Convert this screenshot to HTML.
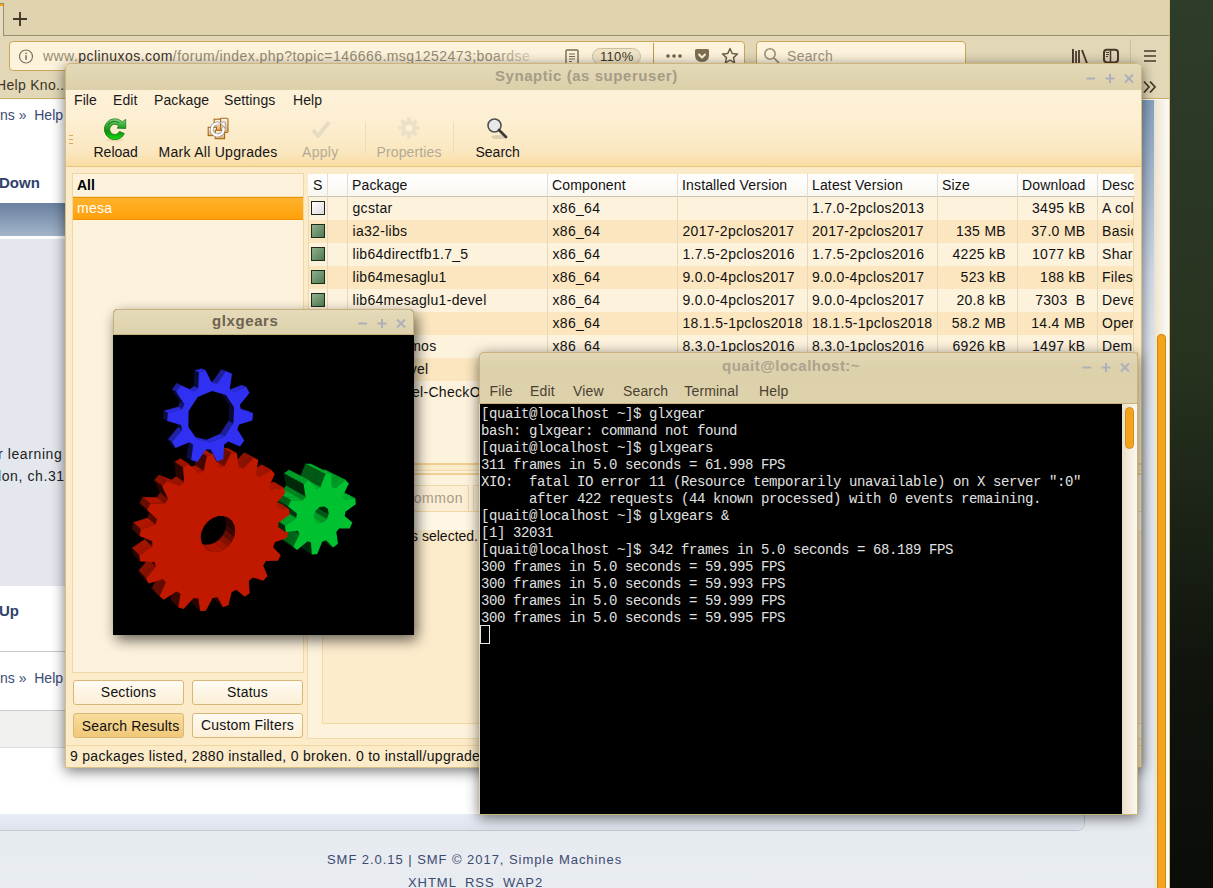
<!DOCTYPE html>
<html><head><meta charset="utf-8">
<style>
*{margin:0;padding:0;box-sizing:border-box}
html,body{width:1213px;height:888px;overflow:hidden}
body{position:relative;font-family:"Liberation Sans",sans-serif;font-size:14px;color:#000;background:linear-gradient(180deg,#2e3c2a 0%,#27331f 40%,#10140d 75%,#0a0c08 100%)}
.a{position:absolute}
.t{position:absolute;white-space:nowrap;line-height:16px}
/* firefox */
#ff{left:0;top:0;width:1170px;height:888px;background:#fff;overflow:hidden;border-right:1px solid #d8c48c}
#tabbar{left:0;top:0;width:1170px;height:36px;background:#dfd3b0;border-bottom:1px solid #9c8c6a}
#nav{left:0;top:36px;width:1170px;height:63px;background:#e2d7b6;border-bottom:1px solid #c9ad6a}
#page{left:0;top:100px;width:1170px;height:788px;background:#fff}
/* windows */
.win{position:absolute;box-shadow:0 3px 14px rgba(0,0,0,.55)}
#syn{left:65px;top:63px;width:1077px;height:705px;background:#fcebc8;border-radius:5px 5px 0 0;overflow:hidden}
.title{position:absolute;left:0;top:0;right:0;height:27px;background:linear-gradient(#e3d8b6,#dcd0ab);border-radius:6px 6px 0 0;font-weight:bold;color:#a39a84;text-align:center;line-height:27px}
.wbtn{position:absolute;color:#a8a8b0;font-weight:bold;font-size:15px;line-height:16px}
.mono{font-family:"Liberation Mono",monospace}
</style></head><body>
<div id="ff" class="a">
  <div id="tabbar" class="a">
    <div class="a" style="left:0;top:3px;width:4px;height:33px;background:#e6dcc0;border-right:1px solid #9a8c70;border-top:1px solid #9a8c70"></div>
    <div class="a" style="left:0;top:4px;width:3px;height:2px;background:#fca40e"></div>
    <svg class="a" style="left:12px;top:11px" width="16" height="16" viewBox="0 0 16 16"><path d="M8 1V15M1 8H15" stroke="#45362a" stroke-width="1.9"/></svg>
  </div>
  <div id="nav" class="a">
    <div class="a" style="left:9px;top:5px;width:736px;height:30px;background:#fdf3dc;border:1px solid #c7a65c;border-radius:4px"></div>
    <svg class="a" style="left:17px;top:12px" width="18" height="18" viewBox="0 0 18 18"><circle cx="9" cy="8.5" r="6.5" fill="none" stroke="#7d705a" stroke-width="1.2"/><rect x="8.3" y="7.2" width="1.5" height="4.6" fill="#7d705a"/><rect x="8.3" y="4.6" width="1.5" height="1.5" fill="#7d705a"/></svg>
    <div class="t" style="left:43px;top:12px;font-size:14px;color:#978b70;letter-spacing:0.45px">www.<span style="color:#3e3426">pclinuxos.com</span>/forum/index.php?topic=146666.msg1252473;boardse</div>
    <div class="a" style="left:490px;top:6px;width:75px;height:28px;background:linear-gradient(90deg,rgba(253,243,220,0),#fdf3dc 80%)"></div>
    <svg class="a" style="left:565px;top:13px" width="14" height="16" viewBox="0 0 14 16"><rect x="1" y="1" width="12" height="14" rx="1" fill="none" stroke="#786a52" stroke-width="1.4"/><path d="M4 5h6M4 7.5h6M4 10h6M4 12.5h3" stroke="#786a52" stroke-width="1"/></svg>
    <div class="a" style="left:592px;top:12px;width:49px;height:17px;border:1px solid #c9bea2;border-radius:9px;background:#efe4c6"></div>
    <div class="t" style="left:600px;top:13px;font-size:13px;color:#3e3426;letter-spacing:0.3px">110%</div>
    <div class="a" style="left:653px;top:7px;width:1px;height:27px;background:#c49a48"></div>
    <svg class="a" style="left:665px;top:17px" width="18" height="6"><circle cx="3" cy="3" r="1.8" fill="#6e6048"/><circle cx="9" cy="3" r="1.8" fill="#6e6048"/><circle cx="15" cy="3" r="1.8" fill="#6e6048"/></svg>
    <svg class="a" style="left:694px;top:12px" width="16" height="16" viewBox="0 0 16 16"><path d="M1 2.5Q1 1 2.5 1h11Q15 1 15 2.5V7Q15 14 8 14Q1 14 1 7Z" fill="#7d6e52"/><path d="M4.5 6L8 9.5L11.5 6" fill="none" stroke="#fdf3dc" stroke-width="2"/></svg>
    <svg class="a" style="left:721px;top:11px" width="18" height="18" viewBox="0 0 18 18"><path d="M9 1.5L11.2 6.4L16.5 7L12.5 10.6L13.6 15.9L9 13.2L4.4 15.9L5.5 10.6L1.5 7L6.8 6.4Z" fill="none" stroke="#6e6048" stroke-width="1.5" stroke-linejoin="round"/></svg>
    <div class="a" style="left:756px;top:5px;width:210px;height:30px;background:#fdf3dc;border:1px solid #c7a65c;border-radius:4px"></div>
    <svg class="a" style="left:763px;top:11px" width="18" height="18" viewBox="0 0 18 18"><circle cx="7" cy="7" r="5.2" fill="none" stroke="#9d917a" stroke-width="1.6"/><path d="M10.8 10.8L16 16" stroke="#9d917a" stroke-width="1.8"/></svg>
    <div class="t" style="left:787px;top:12px;font-size:14px;color:#9d917a;letter-spacing:0.3px">Search</div>
    <svg class="a" style="left:1071px;top:12px" width="18" height="16" viewBox="0 0 18 16"><rect x="1" y="1" width="1.9" height="15" fill="#4a3a2c"/><rect x="4.2" y="3" width="1.7" height="13" fill="#4a3a2c"/><rect x="7.1" y="2" width="1.8" height="14" fill="#4a3a2c"/><path d="M11 2L16 15.5" stroke="#4a3a2c" stroke-width="1.9"/></svg>
    <svg class="a" style="left:1102px;top:12px" width="18" height="16" viewBox="0 0 18 16"><rect x="2" y="1.8" width="14" height="12.6" rx="2.8" fill="none" stroke="#4a3a2c" stroke-width="2"/><path d="M8.5 1.5V14.5" stroke="#4a3a2c" stroke-width="1.5"/><path d="M4 4.5h3M4 6.5h3M4 8.5h2" stroke="#4a3a2c" stroke-width="1"/></svg>
    <div class="a" style="left:1130px;top:3px;width:1px;height:30px;background:#cdbf9a"></div>
    <svg class="a" style="left:1143px;top:13px" width="14" height="14" viewBox="0 0 14 14"><path d="M1 2h12M1 7h12M1 12h12" stroke="#4a3a2c" stroke-width="1.7"/></svg>
    <div class="t" style="left:-4px;top:41px;font-size:14px;color:#3e3426;letter-spacing:0.3px">Help Kno..</div>
    <svg class="a" style="left:1142px;top:44px" width="16" height="14" viewBox="0 0 16 14"><path d="M2 1.5L7 7L2 12.5M8 1.5L13 7L8 12.5" fill="none" stroke="#4a3a2c" stroke-width="1.8"/></svg>
  </div>
  <div id="page" class="a">
    <div class="a" style="left:0;top:0;width:1154px;height:788px;background:linear-gradient(180deg,#87a2c0 0px,#a9bcd2 80px,#d2dce8 170px,#e2e8ef 240px,#e8ecf1 788px)"></div>
    <div class="a" style="left:-10px;top:0;width:1095px;height:731px;background:#fff;border:1px solid #c4c8cc;border-top:none;border-radius:0 0 8px 0"></div>
    <div class="t" style="left:0;top:7px;color:#3b4a74">ns&nbsp;»&nbsp; Help</div>
    <div class="t" style="left:-1px;top:75px;font-weight:bold;font-size:15px;color:#30426a">Down</div>
    <div class="a" style="left:0;top:103px;width:1084px;height:33px;background:linear-gradient(#6a809e,#a2b5ca)"></div>
    <div class="a" style="left:0;top:139px;width:1084px;height:347px;background:#e4e8ee"></div>
    <div class="t" style="left:-2px;top:346px;color:#222;letter-spacing:0.6px">r learning</div>
    <div class="t" style="left:-2px;top:368px;color:#222;letter-spacing:0.6px">lon, ch.31</div>
    <div class="t" style="left:-1px;top:503px;font-weight:bold;font-size:15px;color:#30426a">Up</div>
    <div class="a" style="left:0;top:551px;width:1084px;height:1px;background:#c6c9cc"></div>
    <div class="t" style="left:0;top:570px;color:#3b4a74">ns&nbsp;»&nbsp; Help</div>
    <div class="a" style="left:0;top:610px;width:1084px;height:1px;background:#c9cbcc"></div>
    <div class="a" style="left:0;top:611px;width:1084px;height:36px;background:#f1f1ef"></div>
    <div class="a" style="left:0;top:647px;width:1084px;height:1px;background:#dcdcdc"></div>
    <div class="a" style="left:0;top:714px;width:1084px;height:16px;background:linear-gradient(#e8ecf4,#dde3ee);border-radius:0 0 8px 0"></div>
    <div class="t" style="left:327px;top:752px;font-size:13px;color:#3b4a70;letter-spacing:0.95px">SMF 2.0.15 | SMF © 2017, Simple Machines</div>
    <div class="t" style="left:408px;top:775px;font-size:13px;color:#3b4a70;letter-spacing:0.95px">XHTML</div><div class="t" style="left:465px;top:775px;font-size:13px;color:#3b4a70;letter-spacing:0.95px">RSS</div><div class="t" style="left:503px;top:775px;font-size:13px;color:#3b4a70;letter-spacing:0.95px">WAP2</div>
    <div class="a" style="left:1154px;top:0;width:15px;height:788px;background:linear-gradient(90deg,#ede4d0,#fdfbf6)"></div>
    <div class="a" style="left:1157px;top:234px;width:9px;height:560px;background:#f5a31a;border:1px solid #d08a10;border-radius:4px"></div>
  </div>
</div>

<div id="syn" class="win">
<div class="a" style="left:0px;top:0px;width:1077px;height:27px;background:linear-gradient(#e4d9b8,#dcd0aa);border-radius:5px 5px 0 0;border:1px solid #cfb47a;border-bottom:none"></div>
<div class="t" style="left:430px;top:5px;font-weight:bold;font-size:15px;color:#a59c86;letter-spacing:0.55px">Synaptic (as superuser)</div>
<svg class="a" style="left:1021px;top:10px" width="10" height="10" viewBox="0 0 10 10"><path d="M0.5 5.5H9" stroke="#adb0ba" stroke-width="2"/></svg>
<svg class="a" style="left:1040px;top:10px" width="10" height="10" viewBox="0 0 10 10"><path d="M0.5 5.5H9.5M5 1V10" stroke="#adb0ba" stroke-width="2"/></svg>
<svg class="a" style="left:1059px;top:10px" width="10" height="10" viewBox="0 0 10 10"><path d="M1 1.5L9 9.5M9 1.5L1 9.5" stroke="#adb0ba" stroke-width="2"/></svg>
<div class="a" style="left:0px;top:27px;width:1077px;height:77px;background:linear-gradient(180deg,#fdf1d8 0px,#fdefd2 30px,#fbe8c2 60px,#f8dca4 76px)"></div>
<div class="a" style="left:0px;top:103px;width:1077px;height:1px;background:#ecc57a"></div>
<div class="t" style="left:9px;top:29px;letter-spacing:0.1px;color:#1a1a1a">File</div>
<div class="t" style="left:48px;top:29px;letter-spacing:0.1px;color:#1a1a1a">Edit</div>
<div class="t" style="left:89px;top:29px;letter-spacing:0.1px;color:#1a1a1a">Package</div>
<div class="t" style="left:159px;top:29px;letter-spacing:0.1px;color:#1a1a1a">Settings</div>
<div class="t" style="left:228px;top:29px;letter-spacing:0.1px;color:#1a1a1a">Help</div>
<div class="a" style="left:4px;top:72px;width:4px;height:1px;background:#d9a860"></div>
<div class="a" style="left:4px;top:76px;width:4px;height:1px;background:#d9a860"></div>
<div class="a" style="left:4px;top:80px;width:4px;height:1px;background:#d9a860"></div>
<div class="t" style="left:28.5px;top:81px;color:#141414">Reload</div>
<div class="t" style="left:93.5px;top:81px;color:#141414;letter-spacing:0.28px">Mark All Upgrades</div>
<div class="t" style="left:237px;top:81px;color:#b4aa94;letter-spacing:0.3px">Apply</div>
<div class="t" style="left:311.5px;top:81px;color:#b4aa94;letter-spacing:0.12px">Properties</div>
<div class="t" style="left:410.5px;top:81px;color:#141414">Search</div>
<div class="a" style="left:300px;top:59px;width:1px;height:33px;background:#f2dcae"></div>
<div class="a" style="left:388px;top:59px;width:1px;height:33px;background:#f2dcae"></div>
<svg class="a" style="left:35px;top:51px" width="30" height="30" viewBox="0 0 30 30">
<defs><linearGradient id="gr" x1="0" y1="0" x2="0" y2="1"><stop offset="0" stop-color="#8adc8a"/><stop offset="0.35" stop-color="#2ea82e"/><stop offset="0.6" stop-color="#0f8f0f"/><stop offset="1" stop-color="#12e012"/></linearGradient></defs>
<ellipse cx="15" cy="26" rx="9" ry="1.3" fill="rgba(120,80,20,0.12)"/>
<path d="M24.4,19.6 A10.5,10.5 0 1 1 22.3,7.8 L25.7,5.4 L25.7,14.5 L17.2,14.2 L18.6,12.0 A5.1,5.1 0 1 0 19.5,17.4 Z" fill="url(#gr)" stroke="#0b6e0b" stroke-width="0.7" stroke-linejoin="round"/>
<path d="M8 11 A7.5 7.5 0 0 1 19 9" fill="none" stroke="#0a5a0a" stroke-width="1.4" opacity="0.6"/></svg>
<svg class="a" style="left:138px;top:51px" width="30" height="30" viewBox="0 0 30 30">
<defs><linearGradient id="cd" x1="0" y1="0" x2="0" y2="1"><stop offset="0" stop-color="#fffaf0"/><stop offset="1" stop-color="#e0a860"/></linearGradient></defs>
<rect x="17" y="4.2" width="8" height="14.3" rx="1.2" fill="url(#cd)" stroke="#a86812" stroke-width="1.1"/>
<rect x="11.2" y="5.2" width="6.4" height="11.7" fill="url(#cd)" stroke="#a86812" stroke-width="1.1"/>
<rect x="5.2" y="13.3" width="8.3" height="8.3" fill="url(#cd)" stroke="#a86812" stroke-width="1.1"/>
<rect x="12.3" y="16.3" width="9.3" height="8.4" fill="url(#cd)" stroke="#a86812" stroke-width="1.1"/>
<path d="M20.3,13.5 A6,6 0 1 1 15.5,9.5" fill="none" stroke="#8a8e92" stroke-width="3.6"/>
<path d="M20.3,13.5 A6,6 0 1 1 15.5,9.5" fill="none" stroke="#fcfcfc" stroke-width="2.4"/>
<path d="M16.6,8.1 H22.3 V14.2 Z" fill="#fcfcfc" stroke="#8a8e92" stroke-width="0.8"/></svg>
<svg class="a" style="left:246px;top:57px" width="20" height="20" viewBox="0 0 20 20"><path d="M2 10L7 16L18 2" fill="none" stroke="#e6dcc4" stroke-width="4" stroke-linejoin="round"/></svg>
<svg class="a" style="left:333px;top:54px" width="22" height="22" viewBox="0 0 22 22"><g fill="#ece0c6"><circle cx="11" cy="11" r="7.5"/><rect x="9" y="0.5" width="4" height="21" rx="1"/><rect x="0.5" y="9" width="21" height="4" rx="1"/><rect x="9" y="0.5" width="4" height="21" rx="1" transform="rotate(45 11 11)"/><rect x="9" y="0.5" width="4" height="21" rx="1" transform="rotate(-45 11 11)"/></g><circle cx="11" cy="11" r="3.5" fill="#fcf0d8"/></svg>
<svg class="a" style="left:421px;top:54px" width="24" height="24" viewBox="0 0 24 24"><ellipse cx="13" cy="20" rx="8" ry="2" fill="rgba(0,0,0,0.12)"/><circle cx="8.5" cy="8.5" r="6.5" fill="#e8e8e8" stroke="#505050" stroke-width="1.6"/><path d="M13 13L20 20" stroke="#3a3a3a" stroke-width="2.8" stroke-linecap="round"/></svg>
<div class="a" style="left:0px;top:104px;width:1077px;height:601px;background:#fcebc8"></div>
<div class="a" style="left:7px;top:110px;width:232px;height:500px;background:#fdf2dc;border:1px solid #f0d8a6"></div>
<div class="a" style="left:8px;top:111px;width:230px;height:23px;background:#fdf2dc;border-bottom:1px solid #f2ddb0"></div>
<div class="t" style="left:12px;top:114px;font-weight:bold;font-size:14px;color:#000">All</div>
<div class="a" style="left:8px;top:134px;width:230px;height:23px;background:linear-gradient(#ffb32c,#ffa00a);border-top:1px solid #f09800;border-bottom:1px solid #ee9200"></div>
<div class="t" style="left:12px;top:137px;color:#fff;letter-spacing:0.3px">mesa</div>
<div class="a" style="left:8px;top:617px;width:111px;height:25px;background:linear-gradient(#fefbf3,#fcefd6);border:1px solid #d8b878;border-radius:3px"></div><div class="t" style="left:8px;top:621px;width:111px;text-align:center;color:#111;letter-spacing:0.2px">Sections</div>
<div class="a" style="left:127px;top:617px;width:111px;height:25px;background:linear-gradient(#fefbf3,#fcefd6);border:1px solid #d8b878;border-radius:3px"></div><div class="t" style="left:127px;top:621px;width:111px;text-align:center;color:#111;letter-spacing:0.2px">Status</div>
<div class="a" style="left:8px;top:650px;width:111px;height:25px;background:linear-gradient(#f8dc9c,#f0c878);border:1px solid #d8b878;border-radius:3px"></div><div class="t" style="left:10px;top:655px;width:111px;text-align:center;color:#111;letter-spacing:0.2px">Search Results</div>
<div class="a" style="left:127px;top:650px;width:111px;height:25px;background:linear-gradient(#fefbf3,#fcefd6);border:1px solid #d8b878;border-radius:3px"></div><div class="t" style="left:127px;top:654px;width:111px;text-align:center;color:#111;letter-spacing:0.2px">Custom Filters</div>
<div class="a" style="left:242px;top:407px;width:835px;height:269px;background:#fdf3dc;border:1px solid #f2daa8"></div>
<div class="a" style="left:257px;top:448px;width:820px;height:213px;border:1px solid #f2d9a4;background:#fdeccc"></div>
<div class="a" style="left:242px;top:400px;width:835px;height:2px;background:#f0cf90"></div>
<div class="a" style="left:242px;top:410px;width:835px;height:2px;background:#f0cf90"></div>
<div class="a" style="left:315px;top:422px;width:89px;height:26px;background:#fcefd6;border:1px solid #f0d8a8;border-bottom:none"></div>
<div class="t" style="left:338px;top:427px;color:#a89c88;letter-spacing:0.55px">Common</div>
<div class="a" style="left:408px;top:422px;width:47px;height:26px;background:#fcefd6;border:1px solid #f0d8a8;border-bottom:none"></div>
<div class="a" style="left:258px;top:449px;width:819px;height:18px;background:#fef6e6"></div>
<div class="t" style="left:85px;top:465px;width:328px;text-align:right;color:#111;letter-spacing:0px">No package is selected.</div>
<div class="a" style="left:0px;top:682px;width:1077px;height:1px;background:#f2d89e"></div>
<div class="t" style="left:5px;top:685px;color:#111;letter-spacing:0.3px">9 packages listed, 2880 installed, 0 broken. 0 to install/upgrade</div>
<div class="a" style="left:243px;top:111px;width:826px;height:289px;background:#fdf2dc;border-left:1px solid #f0d8a6;border-right:1px solid #f0d8a6;border-top:1px solid #f0d8a6"></div>
<div class="a" style="left:243px;top:111px;width:826px;height:23px;background:linear-gradient(#ffffff,#faf7f0);border-bottom:1px solid #c8c2b6"></div>
<div class="a" style="left:244px;top:134px;width:824px;height:23px;background:#fdf2dc"></div>
<div class="a" style="left:244px;top:157px;width:824px;height:23px;background:#fbe6bf"></div>
<div class="a" style="left:244px;top:180px;width:824px;height:23px;background:#fdf2dc"></div>
<div class="a" style="left:244px;top:203px;width:824px;height:23px;background:#fbe6bf"></div>
<div class="a" style="left:244px;top:226px;width:824px;height:23px;background:#fdf2dc"></div>
<div class="a" style="left:244px;top:249px;width:824px;height:23px;background:#fbe6bf"></div>
<div class="a" style="left:244px;top:272px;width:824px;height:23px;background:#fdf2dc"></div>
<div class="a" style="left:244px;top:295px;width:824px;height:23px;background:#fbe6bf"></div>
<div class="a" style="left:244px;top:318px;width:824px;height:23px;background:#fdf2dc"></div>
<div class="a" style="left:262px;top:111px;width:1px;height:289px;background:#e6d8bc"></div>
<div class="a" style="left:282px;top:111px;width:1px;height:289px;background:#e6d8bc"></div>
<div class="a" style="left:482px;top:111px;width:1px;height:289px;background:#e6d8bc"></div>
<div class="a" style="left:612px;top:111px;width:1px;height:289px;background:#e6d8bc"></div>
<div class="a" style="left:742px;top:111px;width:1px;height:289px;background:#e6d8bc"></div>
<div class="a" style="left:872px;top:111px;width:1px;height:289px;background:#e6d8bc"></div>
<div class="a" style="left:952px;top:111px;width:1px;height:289px;background:#e6d8bc"></div>
<div class="a" style="left:1032px;top:111px;width:1px;height:289px;background:#e6d8bc"></div>
<div class="a" style="left:262px;top:112px;width:1px;height:21px;background:#e2ddd4"></div>
<div class="a" style="left:282px;top:112px;width:1px;height:21px;background:#e2ddd4"></div>
<div class="a" style="left:482px;top:112px;width:1px;height:21px;background:#e2ddd4"></div>
<div class="a" style="left:612px;top:112px;width:1px;height:21px;background:#e2ddd4"></div>
<div class="a" style="left:742px;top:112px;width:1px;height:21px;background:#e2ddd4"></div>
<div class="a" style="left:872px;top:112px;width:1px;height:21px;background:#e2ddd4"></div>
<div class="a" style="left:952px;top:112px;width:1px;height:21px;background:#e2ddd4"></div>
<div class="a" style="left:1032px;top:112px;width:1px;height:21px;background:#e2ddd4"></div>
<div class="t" style="left:248px;top:114px;color:#111;letter-spacing:0.15px">S</div>
<div class="t" style="left:287px;top:114px;color:#111;letter-spacing:0.15px">Package</div>
<div class="t" style="left:487px;top:114px;color:#111;letter-spacing:0.15px">Component</div>
<div class="t" style="left:617px;top:114px;color:#111;letter-spacing:0.15px">Installed Version</div>
<div class="t" style="left:747px;top:114px;color:#111;letter-spacing:0.15px">Latest Version</div>
<div class="t" style="left:877px;top:114px;color:#111;letter-spacing:0.15px">Size</div>
<div class="t" style="left:957px;top:114px;color:#111;letter-spacing:0.15px">Download</div>
<div class="t" style="left:1037px;top:114px;color:#111;letter-spacing:0.15px">Desc</div>
<div class="a" style="left:246px;top:138px;width:14px;height:14px;background:linear-gradient(135deg,#ffffff,#dcdcdc);border:1px solid #222"></div>
<div class="t" style="left:287.5px;top:137px;color:#111;letter-spacing:0.3px">gcstar</div>
<div class="t" style="left:487.5px;top:137px;color:#111;letter-spacing:0.3px">x86_64</div>
<div class="t" style="left:747px;top:137px;color:#111;letter-spacing:0.3px">1.7.0-2pclos2013</div>
<div class="t" style="left:952px;top:137px;width:68.5px;text-align:right;color:#111;letter-spacing:0.3px">3495 kB</div>
<div class="a" style="left:1037px;top:137px;width:31px;height:18px;overflow:hidden"><div class="t" style="left:0;top:0;color:#111;letter-spacing:0.3px">A col</div></div>
<div class="a" style="left:246px;top:161px;width:14px;height:14px;background:linear-gradient(135deg,#90b090,#4f7a50);border:1px solid #1e2a1e"></div>
<div class="t" style="left:287.5px;top:160px;color:#111;letter-spacing:0.3px">ia32-libs</div>
<div class="t" style="left:487.5px;top:160px;color:#111;letter-spacing:0.3px">x86_64</div>
<div class="t" style="left:617.5px;top:160px;color:#111;letter-spacing:0.3px">2017-2pclos2017</div>
<div class="t" style="left:747px;top:160px;color:#111;letter-spacing:0.3px">2017-2pclos2017</div>
<div class="t" style="left:872px;top:160px;width:69px;text-align:right;color:#111;letter-spacing:0.3px">135 MB</div>
<div class="t" style="left:952px;top:160px;width:68.5px;text-align:right;color:#111;letter-spacing:0.3px">37.0 MB</div>
<div class="a" style="left:1037px;top:160px;width:31px;height:18px;overflow:hidden"><div class="t" style="left:0;top:0;color:#111;letter-spacing:0.3px">Basic</div></div>
<div class="a" style="left:246px;top:184px;width:14px;height:14px;background:linear-gradient(135deg,#90b090,#4f7a50);border:1px solid #1e2a1e"></div>
<div class="t" style="left:287.5px;top:183px;color:#111;letter-spacing:0.3px">lib64directfb1.7_5</div>
<div class="t" style="left:487.5px;top:183px;color:#111;letter-spacing:0.3px">x86_64</div>
<div class="t" style="left:617.5px;top:183px;color:#111;letter-spacing:0.3px">1.7.5-2pclos2016</div>
<div class="t" style="left:747px;top:183px;color:#111;letter-spacing:0.3px">1.7.5-2pclos2016</div>
<div class="t" style="left:872px;top:183px;width:69px;text-align:right;color:#111;letter-spacing:0.3px">4225 kB</div>
<div class="t" style="left:952px;top:183px;width:68.5px;text-align:right;color:#111;letter-spacing:0.3px">1077 kB</div>
<div class="a" style="left:1037px;top:183px;width:31px;height:18px;overflow:hidden"><div class="t" style="left:0;top:0;color:#111;letter-spacing:0.3px">Share</div></div>
<div class="a" style="left:246px;top:207px;width:14px;height:14px;background:linear-gradient(135deg,#90b090,#4f7a50);border:1px solid #1e2a1e"></div>
<div class="t" style="left:287.5px;top:206px;color:#111;letter-spacing:0.3px">lib64mesaglu1</div>
<div class="t" style="left:487.5px;top:206px;color:#111;letter-spacing:0.3px">x86_64</div>
<div class="t" style="left:617.5px;top:206px;color:#111;letter-spacing:0.3px">9.0.0-4pclos2017</div>
<div class="t" style="left:747px;top:206px;color:#111;letter-spacing:0.3px">9.0.0-4pclos2017</div>
<div class="t" style="left:872px;top:206px;width:69px;text-align:right;color:#111;letter-spacing:0.3px">523 kB</div>
<div class="t" style="left:952px;top:206px;width:68.5px;text-align:right;color:#111;letter-spacing:0.3px">188 kB</div>
<div class="a" style="left:1037px;top:206px;width:31px;height:18px;overflow:hidden"><div class="t" style="left:0;top:0;color:#111;letter-spacing:0.3px">Files</div></div>
<div class="a" style="left:246px;top:230px;width:14px;height:14px;background:linear-gradient(135deg,#90b090,#4f7a50);border:1px solid #1e2a1e"></div>
<div class="t" style="left:287.5px;top:229px;color:#111;letter-spacing:0.3px">lib64mesaglu1-devel</div>
<div class="t" style="left:487.5px;top:229px;color:#111;letter-spacing:0.3px">x86_64</div>
<div class="t" style="left:617.5px;top:229px;color:#111;letter-spacing:0.3px">9.0.0-4pclos2017</div>
<div class="t" style="left:747px;top:229px;color:#111;letter-spacing:0.3px">9.0.0-4pclos2017</div>
<div class="t" style="left:872px;top:229px;width:69px;text-align:right;color:#111;letter-spacing:0.3px">20.8 kB</div>
<div class="t" style="left:952px;top:229px;width:68.5px;text-align:right;color:#111;letter-spacing:0.3px">7303&nbsp; B</div>
<div class="a" style="left:1037px;top:229px;width:31px;height:18px;overflow:hidden"><div class="t" style="left:0;top:0;color:#111;letter-spacing:0.3px">Deve</div></div>
<div class="a" style="left:246px;top:253px;width:14px;height:14px;background:linear-gradient(135deg,#90b090,#4f7a50);border:1px solid #1e2a1e"></div>
<div class="t" style="left:287.5px;top:252px;color:#111;letter-spacing:0.3px">mesa</div>
<div class="t" style="left:487.5px;top:252px;color:#111;letter-spacing:0.3px">x86_64</div>
<div class="t" style="left:617.5px;top:252px;color:#111;letter-spacing:0.3px">18.1.5-1pclos2018</div>
<div class="t" style="left:747px;top:252px;color:#111;letter-spacing:0.3px">18.1.5-1pclos2018</div>
<div class="t" style="left:872px;top:252px;width:69px;text-align:right;color:#111;letter-spacing:0.3px">58.2 MB</div>
<div class="t" style="left:952px;top:252px;width:68.5px;text-align:right;color:#111;letter-spacing:0.3px">14.4 MB</div>
<div class="a" style="left:1037px;top:252px;width:31px;height:18px;overflow:hidden"><div class="t" style="left:0;top:0;color:#111;letter-spacing:0.3px">Oper</div></div>
<div class="a" style="left:246px;top:276px;width:14px;height:14px;background:linear-gradient(135deg,#90b090,#4f7a50);border:1px solid #1e2a1e"></div>
<div class="t" style="left:287px;top:275px;width:84.5px;text-align:right;color:#111;letter-spacing:0.3px">mos</div>
<div class="t" style="left:487.5px;top:275px;color:#111;letter-spacing:0.3px">x86_64</div>
<div class="t" style="left:617.5px;top:275px;color:#111;letter-spacing:0.3px">8.3.0-1pclos2016</div>
<div class="t" style="left:747px;top:275px;color:#111;letter-spacing:0.3px">8.3.0-1pclos2016</div>
<div class="t" style="left:872px;top:275px;width:69px;text-align:right;color:#111;letter-spacing:0.3px">6926 kB</div>
<div class="t" style="left:952px;top:275px;width:68.5px;text-align:right;color:#111;letter-spacing:0.3px">1497 kB</div>
<div class="a" style="left:1037px;top:275px;width:31px;height:18px;overflow:hidden"><div class="t" style="left:0;top:0;color:#111;letter-spacing:0.3px">Dem</div></div>
<div class="a" style="left:246px;top:299px;width:14px;height:14px;background:linear-gradient(135deg,#90b090,#4f7a50);border:1px solid #1e2a1e"></div>
<div class="t" style="left:287px;top:298px;width:76.5px;text-align:right;color:#111;letter-spacing:0.3px">vel</div>
<div class="t" style="left:487.5px;top:298px;color:#111;letter-spacing:0.3px">x86_64</div>
<div class="a" style="left:246px;top:322px;width:14px;height:14px;background:linear-gradient(135deg,#90b090,#4f7a50);border:1px solid #1e2a1e"></div>
<div class="t" style="left:347px;top:321px;color:#111;letter-spacing:0.3px">el-CheckOS</div>
<div class="t" style="left:487.5px;top:321px;color:#111;letter-spacing:0.3px">x86_64</div>
<div class="a" style="left:0px;top:27px;width:1077px;height:678px;border:1px solid #d8bf88;border-top:none"></div>
</div>

<div id="glx" class="win" style="left:113px;top:309px;width:301px;height:326px;background:#000;border-radius:5px 5px 0 0;box-shadow:3px 5px 14px rgba(0,0,0,.6)">
<div class="a" style="left:0;top:0;width:301px;height:26px;background:linear-gradient(#e6dbba,#ddd1ac);border-radius:5px 5px 0 0;box-shadow:inset 0 0 0 1px #c9b27c"></div>
<div class="t" style="left:99px;top:4px;font-weight:bold;font-size:15px;color:#6d6350;letter-spacing:0.6px">glxgears</div>
<svg class="a" style="left:245px;top:9px" width="10" height="10"><path d="M0.5 5.5H9" stroke="#adb0ba" stroke-width="2"/></svg>
<svg class="a" style="left:264px;top:9px" width="10" height="10"><path d="M0.5 5.5H9.5M5 1V10" stroke="#adb0ba" stroke-width="2"/></svg>
<svg class="a" style="left:283px;top:9px" width="10" height="10"><path d="M1 1.5L9 9.5M9 1.5L1 9.5" stroke="#adb0ba" stroke-width="2"/></svg>
<svg class="a" style="left:0;top:26px" width="301" height="300" viewBox="0 0 300 300"><rect width="301" height="300" fill="#000"/><polygon points="233.9,159.4 223.1,160.3 210.6,153.6 221.3,152.8" fill="#00b02c" stroke="#00b02c" stroke-width="0.5"/>
<polygon points="223.9,141.0 213.9,149.3 201.4,142.8 211.3,134.7" fill="#009b27" stroke="#009b27" stroke-width="0.5"/>
<polygon points="213.9,149.3 210.5,147.9 198.1,141.5 201.4,142.8" fill="#00a429" stroke="#00a429" stroke-width="0.5"/>
<polygon points="209.8,135.2 204.3,135.2 191.9,129.0 197.3,129.0" fill="#00b02c" stroke="#00b02c" stroke-width="0.5"/>
<polygon points="204.3,135.2 199.2,148.1 186.9,141.6 191.9,129.0" fill="#005a16" stroke="#005a16" stroke-width="0.5"/>
<polygon points="199.2,148.1 195.3,149.6 183.1,143.0 186.9,141.6" fill="#00ad2b" stroke="#00ad2b" stroke-width="0.5"/>
<polygon points="187.7,141.3 182.5,145.2 170.4,138.6 175.5,134.9" fill="#009e28" stroke="#009e28" stroke-width="0.5"/>
<polygon points="182.5,145.2 184.6,157.6 172.6,150.8 170.4,138.6" fill="#00290a" stroke="#00290a" stroke-width="0.5"/>
<polygon points="184.6,157.6 181.7,161.3 169.8,154.4 172.6,150.8" fill="#008421" stroke="#008421" stroke-width="0.5"/>
<polygon points="181.7,161.3 170.0,161.0 158.3,154.0 169.8,154.4" fill="#00af2c" stroke="#00af2c" stroke-width="0.5"/>
<polygon points="170.0,161.0 167.3,167.2 155.6,160.1 158.3,154.0" fill="#006018" stroke="#006018" stroke-width="0.5"/>
<polygon points="167.3,167.2 176.0,174.2 164.2,167.0 155.6,160.1" fill="#00290a" stroke="#00290a" stroke-width="0.5"/>
<polygon points="176.0,174.2 175.3,178.6 163.5,171.3 164.2,167.0" fill="#00370e" stroke="#00370e" stroke-width="0.5"/>
<polygon points="175.3,178.6 164.3,186.3 152.8,178.8 163.5,171.3" fill="#00a128" stroke="#00a128" stroke-width="0.5"/>
<polygon points="164.3,186.3 165.1,192.2 153.6,184.6 152.8,178.8" fill="#00290a" stroke="#00290a" stroke-width="0.5"/>
<polygon points="176.9,191.0 178.6,194.5 166.9,186.9 165.2,183.5" fill="#00290a" stroke="#00290a" stroke-width="0.5"/>
<polygon points="178.6,194.5 172.5,206.8 161.0,198.9 166.9,186.9" fill="#006619" stroke="#006619" stroke-width="0.5"/>
<polygon points="172.5,206.8 176.4,210.1 164.9,202.2 161.0,198.9" fill="#00290a" stroke="#00290a" stroke-width="0.5"/>
<polygon points="190.1,202.7 190.9,214.7 179.2,206.8 178.3,195.0" fill="#00290a" stroke="#00290a" stroke-width="0.5"/>
<polygon points="205.0,200.5 212.2,207.8 200.1,200.2 193.0,192.9" fill="#00290a" stroke="#00290a" stroke-width="0.5"/>
<polygon points="167.5,151.2 155.2,154.4 148.2,150.2 160.4,147.1" fill="#af1600" stroke="#af1600" stroke-width="0.5"/>
<polygon points="155.3,133.6 143.6,140.8 136.6,136.7 148.3,129.7" fill="#a41500" stroke="#a41500" stroke-width="0.5"/>
<polygon points="142.4,124.0 137.5,121.6 130.5,117.8 135.4,120.1" fill="#a11400" stroke="#a11400" stroke-width="0.5"/>
<polygon points="137.5,121.6 127.4,132.3 120.6,128.3 130.5,117.8" fill="#8d1200" stroke="#8d1200" stroke-width="0.5"/>
<polygon points="127.4,132.3 122.9,131.1 116.1,127.1 120.6,128.3" fill="#a91500" stroke="#a91500" stroke-width="0.5"/>
<polygon points="121.2,117.2 115.4,116.7 108.6,112.9 114.4,113.4" fill="#ae1600" stroke="#ae1600" stroke-width="0.5"/>
<polygon points="115.4,116.7 108.3,130.0 101.7,126.0 108.6,112.9" fill="#6c0d00" stroke="#6c0d00" stroke-width="0.5"/>
<polygon points="108.3,130.0 103.2,130.5 96.7,126.5 101.7,126.0" fill="#b01600" stroke="#b01600" stroke-width="0.5"/>
<polygon points="97.2,118.3 91.1,119.9 84.7,116.0 90.7,114.4" fill="#af1600" stroke="#af1600" stroke-width="0.5"/>
<polygon points="91.1,119.9 87.9,134.6 81.6,130.5 84.7,116.0" fill="#440800" stroke="#440800" stroke-width="0.5"/>
<polygon points="87.9,134.6 82.9,136.8 76.6,132.6 81.6,130.5" fill="#aa1500" stroke="#aa1500" stroke-width="0.5"/>
<polygon points="73.0,127.6 67.3,131.2 61.1,127.1 66.8,123.6" fill="#a21400" stroke="#a21400" stroke-width="0.5"/>
<polygon points="67.3,131.2 68.6,145.7 62.5,141.4 61.1,127.1" fill="#290500" stroke="#290500" stroke-width="0.5"/>
<polygon points="68.6,145.7 64.2,149.4 58.1,145.0 62.5,141.4" fill="#981300" stroke="#981300" stroke-width="0.5"/>
<polygon points="64.2,149.4 51.4,144.5 45.4,140.1 58.1,145.0" fill="#a21400" stroke="#a21400" stroke-width="0.5"/>
<polygon points="51.4,144.5 46.6,149.7 40.8,145.2 45.4,140.1" fill="#8a1100" stroke="#8a1100" stroke-width="0.5"/>
<polygon points="46.6,149.7 52.5,162.4 46.6,157.7 40.8,145.2" fill="#290500" stroke="#290500" stroke-width="0.5"/>
<polygon points="52.5,162.4 49.2,167.2 43.4,162.5 46.6,157.7" fill="#7a0f00" stroke="#7a0f00" stroke-width="0.5"/>
<polygon points="49.2,167.2 34.8,167.0 29.1,162.3 43.4,162.5" fill="#af1600" stroke="#af1600" stroke-width="0.5"/>
<polygon points="34.8,167.0 31.7,173.3 26.1,168.4 29.1,162.3" fill="#680d00" stroke="#680d00" stroke-width="0.5"/>
<polygon points="31.7,173.3 41.5,182.7 35.8,177.7 26.1,168.4" fill="#290500" stroke="#290500" stroke-width="0.5"/>
<polygon points="41.5,182.7 39.8,188.1 34.1,183.0 35.8,177.7" fill="#550b00" stroke="#550b00" stroke-width="0.5"/>
<polygon points="39.8,188.1 25.3,192.7 19.8,187.6 34.1,183.0" fill="#ae1600" stroke="#ae1600" stroke-width="0.5"/>
<polygon points="25.3,192.7 24.2,199.3 18.7,194.0 19.8,187.6" fill="#400800" stroke="#400800" stroke-width="0.5"/>
<polygon points="36.9,204.4 36.8,209.7 31.2,204.4 31.3,199.1" fill="#2b0500" stroke="#2b0500" stroke-width="0.5"/>
<polygon points="36.8,209.7 23.9,218.5 18.5,213.0 31.2,204.4" fill="#a11400" stroke="#a11400" stroke-width="0.5"/>
<polygon points="23.9,218.5 24.8,224.6 19.4,219.0 18.5,213.0" fill="#290500" stroke="#290500" stroke-width="0.5"/>
<polygon points="39.0,225.0 40.5,229.7 35.0,224.1 33.4,219.4" fill="#290500" stroke="#290500" stroke-width="0.5"/>
<polygon points="40.5,229.7 30.5,241.5 25.1,235.7 35.0,224.1" fill="#871100" stroke="#871100" stroke-width="0.5"/>
<polygon points="30.5,241.5 33.3,246.5 27.9,240.6 25.1,235.7" fill="#290500" stroke="#290500" stroke-width="0.5"/>
<polygon points="47.4,242.3 50.4,245.9 44.7,240.1 41.8,236.5" fill="#290500" stroke="#290500" stroke-width="0.5"/>
<polygon points="50.4,245.9 44.1,259.3 38.6,253.3 44.7,240.1" fill="#640d00" stroke="#640d00" stroke-width="0.5"/>
<polygon points="65.0,256.8 62.9,270.3 57.1,264.3 59.2,250.9" fill="#3c0700" stroke="#3c0700" stroke-width="0.5"/>
<polygon points="82.8,261.6 84.7,274.0 78.7,268.0 76.8,255.8" fill="#290500" stroke="#290500" stroke-width="0.5"/>
<polygon points="101.9,260.2 107.4,270.3 101.2,264.4 95.7,254.5" fill="#290500" stroke="#290500" stroke-width="0.5"/>
<polygon points="172.2,195.6 162.2,191.0 155.3,186.3 165.2,191.0" fill="#9f1400" stroke="#9f1400" stroke-width="0.5"/>
<polygon points="173.2,172.5 161.6,171.7 154.6,167.3 166.1,168.2" fill="#ae1600" stroke="#ae1600" stroke-width="0.5"/>
<polygon points="111.2,101.4 119.9,88.0 115.3,85.7 106.7,99.0" fill="#1e1e96" stroke="#1e1e96" stroke-width="0.5"/>
<polygon points="119.9,88.0 120.5,72.3 115.8,70.2 115.3,85.7" fill="#0a0a33" stroke="#0a0a33" stroke-width="0.5"/>
<polygon points="120.5,72.3 112.4,60.0 107.8,58.0 115.8,70.2" fill="#0a0a33" stroke="#0a0a33" stroke-width="0.5"/>
<polygon points="83.5,104.2 97.4,107.6 93.0,105.1 79.2,101.7" fill="#2a2ad4" stroke="#2a2ad4" stroke-width="0.5"/>
<polygon points="97.4,107.6 111.2,101.4 106.7,99.0 93.0,105.1" fill="#2a2ad4" stroke="#2a2ad4" stroke-width="0.5"/>
<polygon points="121.0,190.5 118.7,186.0 109.9,179.7 112.2,184.1" fill="#290500" stroke="#290500" stroke-width="0.5"/>
<polygon points="118.7,186.0 115.0,182.7 106.3,176.4 109.9,179.7" fill="#290500" stroke="#290500" stroke-width="0.5"/>
<polygon points="90.5,212.2 94.4,215.4 86.1,208.4 82.3,205.3" fill="#8b1100" stroke="#8b1100" stroke-width="0.5"/>
<polygon points="94.4,215.4 99.2,216.9 90.8,210.0 86.1,208.4" fill="#a31400" stroke="#a31400" stroke-width="0.5"/>
<polygon points="99.2,216.9 104.5,216.7 96.0,209.8 90.8,210.0" fill="#af1600" stroke="#af1600" stroke-width="0.5"/>
<polygon points="104.5,216.7 109.8,214.8 101.2,207.9 96.0,209.8" fill="#ae1600" stroke="#ae1600" stroke-width="0.5"/>
<polygon points="109.8,214.8 114.5,211.3 105.9,204.6 101.2,207.9" fill="#a01400" stroke="#a01400" stroke-width="0.5"/>
<polygon points="114.5,211.3 118.3,206.7 109.7,200.1 105.9,204.6" fill="#861100" stroke="#861100" stroke-width="0.5"/>
<polygon points="118.3,206.7 120.8,201.4 112.1,194.8 109.7,200.1" fill="#630c00" stroke="#630c00" stroke-width="0.5"/>
<polygon points="120.8,201.4 121.7,195.8 113.0,189.3 112.1,194.8" fill="#3b0700" stroke="#3b0700" stroke-width="0.5"/>
<polygon points="121.7,195.8 121.0,190.5 112.2,184.1 113.0,189.3" fill="#290500" stroke="#290500" stroke-width="0.5"/>
<polygon points="213.3,184.0 215.2,178.9 195.4,167.5 193.6,172.5" fill="#005616" stroke="#005616" stroke-width="0.5"/>
<polygon points="215.2,178.9 214.4,174.1 194.5,162.8 195.4,167.5" fill="#00290a" stroke="#00290a" stroke-width="0.5"/>
<polygon points="214.4,174.1 211.0,171.4 191.2,160.3 194.5,162.8" fill="#00290a" stroke="#00290a" stroke-width="0.5"/>
<polygon points="204.6,188.3 209.2,187.6 189.6,175.9 185.1,176.5" fill="#00b02c" stroke="#00b02c" stroke-width="0.5"/>
<polygon points="209.2,187.6 213.3,184.0 193.6,172.5 189.6,175.9" fill="#009926" stroke="#009926" stroke-width="0.5"/>
<polygon points="139.6,78.5 127.3,74.5 122.6,72.4 134.8,76.3" fill="#2a2ad3" stroke="#2a2ad3" stroke-width="0.5"/>
<polygon points="132.9,52.1 119.7,57.2 115.1,55.3 128.1,50.2" fill="#2b2bd5" stroke="#2b2bd5" stroke-width="0.5"/>
<polygon points="112.4,36.1 103.5,49.0 99.0,47.1 107.8,34.4" fill="#1f1f9a" stroke="#1f1f9a" stroke-width="0.5"/>
<polygon points="103.5,49.0 98.8,48.9 94.2,47.0 99.0,47.1" fill="#2c2cdc" stroke="#2c2cdc" stroke-width="0.5"/>
<polygon points="92.2,35.4 85.4,37.6 81.0,35.8 87.7,33.7" fill="#2b2bd7" stroke="#2b2bd7" stroke-width="0.5"/>
<polygon points="85.4,37.6 84.7,53.4 80.3,51.5 81.0,35.8" fill="#0b0b37" stroke="#0b0b37" stroke-width="0.5"/>
<polygon points="84.7,53.4 80.5,56.5 76.1,54.5 80.3,51.5" fill="#2727c3" stroke="#2727c3" stroke-width="0.5"/>
<polygon points="80.5,56.5 67.3,50.6 63.0,48.6 76.1,54.5" fill="#2929cd" stroke="#2929cd" stroke-width="0.5"/>
<polygon points="67.3,50.6 62.6,56.7 58.4,54.7 63.0,48.6" fill="#2020a0" stroke="#2020a0" stroke-width="0.5"/>
<polygon points="62.6,56.7 70.8,69.2 66.5,67.0 58.4,54.7" fill="#0a0a33" stroke="#0a0a33" stroke-width="0.5"/>
<polygon points="70.8,69.2 68.8,74.2 64.6,72.0 66.5,67.0" fill="#171773" stroke="#171773" stroke-width="0.5"/>
<polygon points="68.8,74.2 54.3,78.3 50.2,76.0 64.6,72.0" fill="#2b2bd9" stroke="#2b2bd9" stroke-width="0.5"/>
<polygon points="54.3,78.3 53.7,85.9 49.6,83.5 50.2,76.0" fill="#0d0d3f" stroke="#0d0d3f" stroke-width="0.5"/>
<polygon points="67.5,89.9 68.6,94.9 64.4,92.4 63.3,87.5" fill="#0a0a33" stroke="#0a0a33" stroke-width="0.5"/>
<polygon points="68.6,94.9 58.5,107.0 54.4,104.4 64.4,92.4" fill="#2121a6" stroke="#2121a6" stroke-width="0.5"/>
<polygon points="58.5,107.0 62.1,112.9 58.0,110.3 54.4,104.4" fill="#0a0a33" stroke="#0a0a33" stroke-width="0.5"/>
<polygon points="76.0,107.2 79.6,110.1 75.3,107.6 71.8,104.7" fill="#0a0a33" stroke="#0a0a33" stroke-width="0.5"/>
<polygon points="79.6,110.1 77.6,125.1 73.4,122.4 75.3,107.6" fill="#0e0e47" stroke="#0e0e47" stroke-width="0.5"/>
<polygon points="97.2,114.3 103.5,126.4 99.0,123.8 92.8,111.8" fill="#0a0a33" stroke="#0a0a33" stroke-width="0.5"/>
<path d="M114.7,106.4 L126.5,111.4 L130.8,105.6 L123.8,94.3 L125.7,89.5 L138.8,85.6 L139.6,78.5 L127.3,74.5 L126.4,69.7 L136.0,58.1 L132.9,52.1 L119.7,57.2 L116.3,54.1 L118.5,38.7 L112.4,36.1 L103.5,49.0 L98.8,48.9 L92.2,35.4 L85.4,37.6 L84.7,53.4 L80.5,56.5 L67.3,50.6 L62.6,56.7 L70.8,69.2 L68.8,74.2 L54.3,78.3 L53.7,85.9 L67.5,89.9 L68.6,94.9 L58.5,107.0 L62.1,112.9 L76.0,107.2 L79.6,110.1 L77.6,125.1 L83.8,127.1 L92.5,114.5 L97.2,114.3 L103.5,126.4 L109.8,124.1 L110.7,109.4Z M111.2,101.4 L119.9,88.0 L120.5,72.3 L112.4,60.0 L98.6,56.0 L84.3,62.0 L75.1,75.9 L74.9,92.1 L83.5,104.2 L97.4,107.6Z" fill="#3030f2" fill-rule="evenodd"/>
<polygon points="169.9,152.6 157.6,155.8 155.2,154.4 167.5,151.2" fill="#af1600" stroke="#af1600" stroke-width="0.5"/>
<polygon points="157.8,134.9 145.9,142.1 143.6,140.8 155.3,133.6" fill="#a41500" stroke="#a41500" stroke-width="0.5"/>
<polygon points="144.8,125.3 139.9,122.9 137.5,121.6 142.4,124.0" fill="#a11400" stroke="#a11400" stroke-width="0.5"/>
<polygon points="139.9,122.9 129.8,133.6 127.4,132.3 137.5,121.6" fill="#8d1200" stroke="#8d1200" stroke-width="0.5"/>
<polygon points="129.8,133.6 125.2,132.4 122.9,131.1 127.4,132.3" fill="#a91500" stroke="#a91500" stroke-width="0.5"/>
<polygon points="123.5,118.5 117.7,118.0 115.4,116.7 121.2,117.2" fill="#ae1600" stroke="#ae1600" stroke-width="0.5"/>
<polygon points="117.7,118.0 110.5,131.4 108.3,130.0 115.4,116.7" fill="#6c0d00" stroke="#6c0d00" stroke-width="0.5"/>
<polygon points="110.5,131.4 105.5,131.9 103.2,130.5 108.3,130.0" fill="#b01600" stroke="#b01600" stroke-width="0.5"/>
<polygon points="99.5,119.6 93.3,121.2 91.1,119.9 97.2,118.3" fill="#af1600" stroke="#af1600" stroke-width="0.5"/>
<polygon points="93.3,121.2 90.1,136.0 87.9,134.6 91.1,119.9" fill="#440800" stroke="#440800" stroke-width="0.5"/>
<polygon points="90.1,136.0 85.1,138.2 82.9,136.8 87.9,134.6" fill="#aa1500" stroke="#aa1500" stroke-width="0.5"/>
<polygon points="75.2,129.0 69.4,132.6 67.3,131.2 73.0,127.6" fill="#a21400" stroke="#a21400" stroke-width="0.5"/>
<polygon points="69.4,132.6 70.7,147.2 68.6,145.7 67.3,131.2" fill="#290500" stroke="#290500" stroke-width="0.5"/>
<polygon points="70.7,147.2 66.3,150.9 64.2,149.4 68.6,145.7" fill="#981300" stroke="#981300" stroke-width="0.5"/>
<polygon points="66.3,150.9 53.4,146.0 51.4,144.5 64.2,149.4" fill="#a21400" stroke="#a21400" stroke-width="0.5"/>
<polygon points="53.4,146.0 48.6,151.2 46.6,149.7 51.4,144.5" fill="#8a1100" stroke="#8a1100" stroke-width="0.5"/>
<polygon points="48.6,151.2 54.5,163.9 52.5,162.4 46.6,149.7" fill="#290500" stroke="#290500" stroke-width="0.5"/>
<polygon points="54.5,163.9 51.2,168.8 49.2,167.2 52.5,162.4" fill="#7a0f00" stroke="#7a0f00" stroke-width="0.5"/>
<polygon points="51.2,168.8 36.7,168.7 34.8,167.0 49.2,167.2" fill="#af1600" stroke="#af1600" stroke-width="0.5"/>
<polygon points="36.7,168.7 33.6,174.9 31.7,173.3 34.8,167.0" fill="#680d00" stroke="#680d00" stroke-width="0.5"/>
<polygon points="33.6,174.9 43.5,184.4 41.5,182.7 31.7,173.3" fill="#290500" stroke="#290500" stroke-width="0.5"/>
<polygon points="43.5,184.4 41.7,189.8 39.8,188.1 41.5,182.7" fill="#550b00" stroke="#550b00" stroke-width="0.5"/>
<polygon points="41.7,189.8 27.2,194.5 25.3,192.7 39.8,188.1" fill="#ae1600" stroke="#ae1600" stroke-width="0.5"/>
<polygon points="27.2,194.5 26.0,201.1 24.2,199.3 25.3,192.7" fill="#400800" stroke="#400800" stroke-width="0.5"/>
<polygon points="38.8,206.2 38.7,211.5 36.8,209.7 36.9,204.4" fill="#2b0500" stroke="#2b0500" stroke-width="0.5"/>
<polygon points="38.7,211.5 25.7,220.4 23.9,218.5 36.8,209.7" fill="#a11400" stroke="#a11400" stroke-width="0.5"/>
<polygon points="25.7,220.4 26.7,226.5 24.8,224.6 23.9,218.5" fill="#290500" stroke="#290500" stroke-width="0.5"/>
<polygon points="40.9,226.9 42.4,231.6 40.5,229.7 39.0,225.0" fill="#290500" stroke="#290500" stroke-width="0.5"/>
<polygon points="42.4,231.6 32.4,243.4 30.5,241.5 40.5,229.7" fill="#871100" stroke="#871100" stroke-width="0.5"/>
<polygon points="32.4,243.4 35.2,248.5 33.3,246.5 30.5,241.5" fill="#290500" stroke="#290500" stroke-width="0.5"/>
<polygon points="49.3,244.2 52.3,247.8 50.4,245.9 47.4,242.3" fill="#290500" stroke="#290500" stroke-width="0.5"/>
<polygon points="52.3,247.8 46.0,261.3 44.1,259.3 50.4,245.9" fill="#640d00" stroke="#640d00" stroke-width="0.5"/>
<polygon points="67.0,258.8 64.8,272.4 62.9,270.3 65.0,256.8" fill="#3c0700" stroke="#3c0700" stroke-width="0.5"/>
<polygon points="84.8,263.6 86.7,276.0 84.7,274.0 82.8,261.6" fill="#290500" stroke="#290500" stroke-width="0.5"/>
<polygon points="104.0,262.2 109.5,272.2 107.4,270.3 101.9,260.2" fill="#290500" stroke="#290500" stroke-width="0.5"/>
<polygon points="174.6,197.2 164.6,192.5 162.2,191.0 172.2,195.6" fill="#9f1400" stroke="#9f1400" stroke-width="0.5"/>
<polygon points="175.6,174.0 163.9,173.2 161.6,171.7 173.2,172.5" fill="#ae1600" stroke="#ae1600" stroke-width="0.5"/>
<polygon points="236.5,160.7 225.6,161.6 223.1,160.3 233.9,159.4" fill="#00b02c" stroke="#00b02c" stroke-width="0.5"/>
<polygon points="226.5,142.2 216.5,150.6 213.9,149.3 223.9,141.0" fill="#009b27" stroke="#009b27" stroke-width="0.5"/>
<polygon points="216.5,150.6 213.1,149.3 210.5,147.9 213.9,149.3" fill="#00a429" stroke="#00a429" stroke-width="0.5"/>
<polygon points="212.4,136.5 206.9,136.5 204.3,135.2 209.8,135.2" fill="#00b02c" stroke="#00b02c" stroke-width="0.5"/>
<polygon points="206.9,136.5 201.7,149.5 199.2,148.1 204.3,135.2" fill="#005a16" stroke="#005a16" stroke-width="0.5"/>
<polygon points="201.7,149.5 197.8,150.9 195.3,149.6 199.2,148.1" fill="#00ad2b" stroke="#00ad2b" stroke-width="0.5"/>
<polygon points="190.2,142.6 185.0,146.5 182.5,145.2 187.7,141.3" fill="#009e28" stroke="#009e28" stroke-width="0.5"/>
<polygon points="185.0,146.5 187.1,159.0 184.6,157.6 182.5,145.2" fill="#00290a" stroke="#00290a" stroke-width="0.5"/>
<polygon points="187.1,159.0 184.1,162.7 181.7,161.3 184.6,157.6" fill="#008421" stroke="#008421" stroke-width="0.5"/>
<polygon points="184.1,162.7 172.5,162.4 170.0,161.0 181.7,161.3" fill="#00af2c" stroke="#00af2c" stroke-width="0.5"/>
<polygon points="172.5,162.4 169.7,168.6 167.3,167.2 170.0,161.0" fill="#006018" stroke="#006018" stroke-width="0.5"/>
<polygon points="169.7,168.6 178.4,175.6 176.0,174.2 167.3,167.2" fill="#00290a" stroke="#00290a" stroke-width="0.5"/>
<polygon points="178.4,175.6 177.7,180.1 175.3,178.6 176.0,174.2" fill="#00370e" stroke="#00370e" stroke-width="0.5"/>
<polygon points="177.7,180.1 166.7,187.8 164.3,186.3 175.3,178.6" fill="#00a128" stroke="#00a128" stroke-width="0.5"/>
<polygon points="166.7,187.8 167.5,193.8 165.1,192.2 164.3,186.3" fill="#00290a" stroke="#00290a" stroke-width="0.5"/>
<polygon points="179.3,192.6 181.0,196.0 178.6,194.5 176.9,191.0" fill="#00290a" stroke="#00290a" stroke-width="0.5"/>
<polygon points="181.0,196.0 174.9,208.4 172.5,206.8 178.6,194.5" fill="#006619" stroke="#006619" stroke-width="0.5"/>
<polygon points="174.9,208.4 178.8,211.8 176.4,210.1 172.5,206.8" fill="#00290a" stroke="#00290a" stroke-width="0.5"/>
<polygon points="192.5,204.3 193.4,216.3 190.9,214.7 190.1,202.7" fill="#00290a" stroke="#00290a" stroke-width="0.5"/>
<polygon points="207.5,202.0 214.6,209.4 212.2,207.8 205.0,200.5" fill="#00290a" stroke="#00290a" stroke-width="0.5"/>
<path d="M162.9,168.6 L172.0,157.7 L169.9,152.6 L157.6,155.8 L155.2,152.0 L161.4,138.9 L157.8,134.9 L145.9,142.1 L142.3,139.5 L144.8,125.3 L139.9,122.9 L129.8,133.6 L125.2,132.4 L123.5,118.5 L117.7,118.0 L110.5,131.4 L105.5,131.9 L99.5,119.6 L93.3,121.2 L90.1,136.0 L85.1,138.2 L75.2,129.0 L69.4,132.6 L70.7,147.2 L66.3,150.9 L53.4,146.0 L48.6,151.2 L54.5,163.9 L51.2,168.8 L36.7,168.7 L33.6,174.9 L43.5,184.4 L41.7,189.8 L27.2,194.5 L26.0,201.1 L38.8,206.2 L38.7,211.5 L25.7,220.4 L26.7,226.5 L40.9,226.9 L42.4,231.6 L32.4,243.4 L35.2,248.5 L49.3,244.2 L52.3,247.8 L46.0,261.3 L50.3,264.7 L62.9,256.6 L67.0,258.8 L64.8,272.4 L70.1,274.0 L80.2,263.0 L84.8,263.6 L86.7,276.0 L92.4,275.7 L99.2,263.1 L104.0,262.2 L109.5,272.2 L115.1,270.2 L118.1,257.2 L122.7,254.8 L131.2,261.8 L136.2,258.3 L135.4,245.9 L139.3,242.4 L149.9,245.8 L154.0,241.1 L149.7,230.5 L152.6,226.1 L164.4,225.7 L167.2,220.2 L159.7,212.2 L161.4,207.3 L173.3,203.0 L174.6,197.2 L164.6,192.5 L165.0,187.6 L176.0,179.7 L175.6,174.0 L163.9,173.2Z M121.0,190.5 L118.7,186.0 L115.0,182.7 L110.2,181.0 L104.9,181.0 L99.5,182.9 L94.6,186.3 L90.6,191.1 L88.1,196.6 L87.2,202.3 L88.1,207.7 L90.5,212.2 L94.4,215.4 L99.2,216.9 L104.5,216.7 L109.8,214.8 L114.5,211.3 L118.3,206.7 L120.8,201.4 L121.7,195.8Z" fill="#c11800" fill-rule="evenodd"/>
<polygon points="241.8,163.4 230.8,164.4 225.6,161.6 236.5,160.7" fill="#00b02c" stroke="#00b02c" stroke-width="0.5"/>
<polygon points="231.8,144.8 221.7,153.3 216.5,150.6 226.5,142.2" fill="#009b27" stroke="#009b27" stroke-width="0.5"/>
<polygon points="221.7,153.3 218.3,152.0 213.1,149.3 216.5,150.6" fill="#00a429" stroke="#00a429" stroke-width="0.5"/>
<polygon points="217.6,139.1 212.1,139.1 206.9,136.5 212.4,136.5" fill="#00b02c" stroke="#00b02c" stroke-width="0.5"/>
<polygon points="212.1,139.1 206.8,152.2 201.7,149.5 206.9,136.5" fill="#005a16" stroke="#005a16" stroke-width="0.5"/>
<polygon points="206.8,152.2 202.9,153.7 197.8,150.9 201.7,149.5" fill="#00ad2b" stroke="#00ad2b" stroke-width="0.5"/>
<polygon points="195.2,145.3 190.0,149.2 185.0,146.5 190.2,142.6" fill="#009e28" stroke="#009e28" stroke-width="0.5"/>
<polygon points="190.0,149.2 192.1,161.9 187.1,159.0 185.0,146.5" fill="#00290a" stroke="#00290a" stroke-width="0.5"/>
<polygon points="192.1,161.9 189.1,165.6 184.1,162.7 187.1,159.0" fill="#008421" stroke="#008421" stroke-width="0.5"/>
<polygon points="189.1,165.6 177.4,165.3 172.5,162.4 184.1,162.7" fill="#00af2c" stroke="#00af2c" stroke-width="0.5"/>
<polygon points="177.4,165.3 174.6,171.6 169.7,168.6 172.5,162.4" fill="#006018" stroke="#006018" stroke-width="0.5"/>
<polygon points="174.6,171.6 183.4,178.6 178.4,175.6 169.7,168.6" fill="#00290a" stroke="#00290a" stroke-width="0.5"/>
<polygon points="183.4,178.6 182.6,183.2 177.7,180.1 178.4,175.6" fill="#00370e" stroke="#00370e" stroke-width="0.5"/>
<polygon points="182.6,183.2 171.5,191.0 166.7,187.8 177.7,180.1" fill="#00a128" stroke="#00a128" stroke-width="0.5"/>
<polygon points="171.5,191.0 172.3,197.0 167.5,193.8 166.7,187.8" fill="#00290a" stroke="#00290a" stroke-width="0.5"/>
<polygon points="184.2,195.7 185.9,199.2 181.0,196.0 179.3,192.6" fill="#00290a" stroke="#00290a" stroke-width="0.5"/>
<polygon points="185.9,199.2 179.7,211.7 174.9,208.4 181.0,196.0" fill="#006619" stroke="#006619" stroke-width="0.5"/>
<polygon points="179.7,211.7 183.7,215.1 178.8,211.8 174.9,208.4" fill="#00290a" stroke="#00290a" stroke-width="0.5"/>
<polygon points="197.4,207.5 198.3,219.6 193.4,216.3 192.5,204.3" fill="#00290a" stroke="#00290a" stroke-width="0.5"/>
<polygon points="212.5,205.2 219.7,212.5 214.6,209.4 207.5,202.0" fill="#00290a" stroke="#00290a" stroke-width="0.5"/>
<path d="M225.6,193.5 L236.3,193.5 L238.9,187.6 L231.2,181.0 L232.0,176.7 L242.3,169.3 L241.8,163.4 L230.8,164.4 L229.3,160.9 L235.4,148.5 L231.8,144.8 L221.7,153.3 L218.3,152.0 L217.6,139.1 L212.1,139.1 L206.8,152.2 L202.9,153.7 L195.2,145.3 L190.0,149.2 L192.1,161.9 L189.1,165.6 L177.4,165.3 L174.6,171.6 L183.4,178.6 L182.6,183.2 L171.5,191.0 L172.3,197.0 L184.2,195.7 L185.9,199.2 L179.7,211.7 L183.7,215.1 L194.0,206.3 L197.4,207.5 L198.3,219.6 L203.7,219.2 L208.7,206.7 L212.5,205.2 L219.7,212.5 L224.5,208.7 L222.8,197.1Z M213.3,184.0 L215.2,178.9 L214.4,174.1 L211.0,171.4 L206.3,172.0 L202.2,175.6 L200.3,180.9 L201.2,185.7 L204.6,188.3 L209.2,187.6Z" fill="#00c130" fill-rule="evenodd"/></svg>
</div>
<div id="term" class="win" style="left:479px;top:352px;width:659px;height:463px;background:#dfd3af;border-radius:5px 5px 0 0">
<div class="a" style="left:0;top:0;width:659px;height:52px;background:linear-gradient(#e3d8b6,#ddd1ac 30%,#ded2ad);border-radius:5px 5px 0 0;box-shadow:inset 0 0 0 1px #c9b27c"></div>
<div class="t" style="left:243px;top:6px;font-weight:bold;font-size:15px;color:#aca28c;letter-spacing:0.47px">quait@localhost:~</div>
<svg class="a" style="left:603px;top:10px" width="10" height="10"><path d="M0.5 5.5H9" stroke="#adb0ba" stroke-width="2"/></svg>
<svg class="a" style="left:622px;top:10px" width="10" height="10"><path d="M0.5 5.5H9.5M5 1V10" stroke="#adb0ba" stroke-width="2"/></svg>
<svg class="a" style="left:641px;top:10px" width="10" height="10"><path d="M1 1.5L9 9.5M9 1.5L1 9.5" stroke="#adb0ba" stroke-width="2"/></svg>
<div class="t" style="left:10.5px;top:31px;color:#4a3f30;letter-spacing:0.15px">File</div>
<div class="t" style="left:51px;top:31px;color:#4a3f30;letter-spacing:0.15px">Edit</div>
<div class="t" style="left:94px;top:31px;color:#4a3f30;letter-spacing:0.15px">View</div>
<div class="t" style="left:144px;top:31px;color:#4a3f30;letter-spacing:0.15px">Search</div>
<div class="t" style="left:205.29999999999995px;top:31px;color:#4a3f30;letter-spacing:0.15px">Terminal</div>
<div class="t" style="left:280px;top:31px;color:#4a3f30;letter-spacing:0.15px">Help</div>
<div class="a" style="left:1px;top:52px;width:642px;height:411px;background:#000"></div>
<div class="a" style="left:643px;top:52px;width:15px;height:411px;background:linear-gradient(90deg,#eae0c6,#fbf8f0)"></div>
<div class="a" style="left:646px;top:55px;width:9px;height:42px;background:#f5a31a;border:1px solid #cf8d2a;border-radius:5px"></div>
<div class="a" style="left:658px;top:0;width:1px;height:463px;background:#c9b27c"></div>
<div class="a" style="left:0;top:462px;width:659px;height:1px;background:#c9b27c"></div>
<pre class="a mono" style="left:2px;top:54px;font-size:14px;letter-spacing:-0.4px;line-height:17px;color:#e0e0e0;white-space:pre">[quait@localhost ~]$ glxgear
bash: glxgear: command not found
[quait@localhost ~]$ glxgears
311 frames in 5.0 seconds = 61.998 FPS
XIO:  fatal IO error 11 (Resource temporarily unavailable) on X server ":0"
      after 422 requests (44 known processed) with 0 events remaining.
[quait@localhost ~]$ glxgears &amp;
[1] 32031
[quait@localhost ~]$ 342 frames in 5.0 seconds = 68.189 FPS
300 frames in 5.0 seconds = 59.995 FPS
300 frames in 5.0 seconds = 59.993 FPS
300 frames in 5.0 seconds = 59.999 FPS
300 frames in 5.0 seconds = 59.995 FPS</pre>
<div class="a" style="left:1px;top:273px;width:10px;height:19px;border:1px solid #e8e8e8"></div>
</div>
</body></html>
